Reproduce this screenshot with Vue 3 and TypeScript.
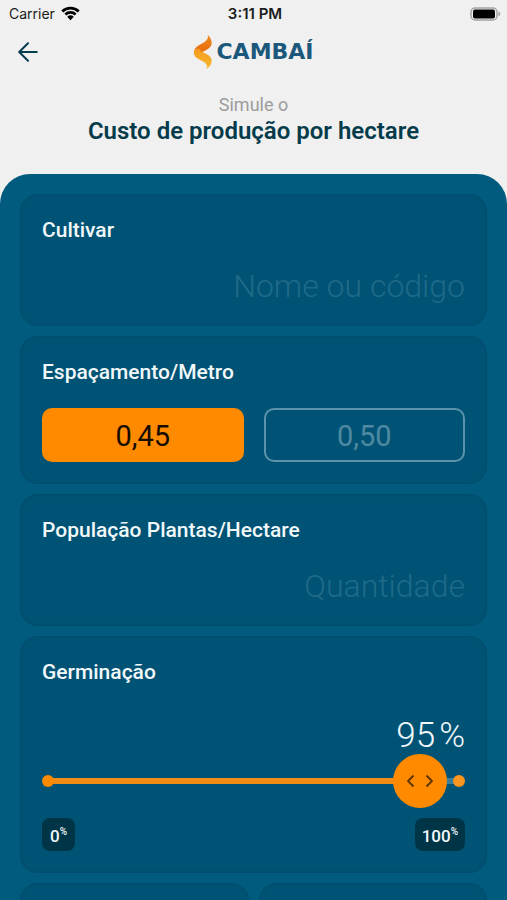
<script setup lang="ts">
import { computed, ref } from 'vue'

const cultivar = ref('')
const population = ref('')
const spacings = ['0,45', '0,50']
const spacing = ref('0,45')
const germination = ref(95)

const fraction = computed(() => germination.value / 100)
const gripStyle = computed(() => ({
  left: `calc(27px + (100% - 54px) * ${fraction.value})`,
}))
const trackStyle = computed(() => ({
  '--filled': `calc(27px + (100% - 54px) * ${fraction.value})`,
}))
</script>

<template>
  <div class="screen">
    <div class="status">
      <span class="carrier">
        Carrier
        <svg class="wifi" viewBox="0 0 18 14" aria-hidden="true">
          <path d="M1.2 5.100a11.200 11.200 0 0 1 15.600 0" />
          <path d="M4.1 8a7.1 7.1 0 0 1 9.8 0" />
          <path class="solid" d="M5.9 10.1a4.6 4.6 0 0 1 6.2 0L9 13.4z" />
        </svg>
      </span>
      <time class="clock">3:11 PM</time>
      <svg class="battery" viewBox="0 0 31 14" aria-hidden="true">
        <rect class="case" x="1" y="1" width="26" height="12" rx="4" />
        <rect x="3" y="2.500" width="22" height="9" rx="2" />
        <path class="tip" d="M28.4 4.6c2.6.8 2.6 4 0 4.8z" />
      </svg>
    </div>

    <header class="bar">
      <button class="back" type="button" aria-label="Voltar">
        <svg viewBox="0 0 20 20" aria-hidden="true">
          <path d="M10 1.2 1.2 10l8.800 8.800M1.500 10H18.800" />
        </svg>
      </button>
      <div class="brand">
        <svg viewBox="0 0 20 36" aria-hidden="true">
          <defs>
            <linearGradient id="flameTop" x1="0" y1="0" x2="0" y2="1">
              <stop offset="0" stop-color="#f08a24" />
              <stop offset="0.6" stop-color="#e8700f" />
              <stop offset="1" stop-color="#f08c1c" />
            </linearGradient>
            <linearGradient id="flameBottom" x1="0" y1="0" x2="0" y2="1">
              <stop offset="0" stop-color="#f39a20" />
              <stop offset="1" stop-color="#f8b92c" />
            </linearGradient>
          </defs>
          <path fill="url(#flameTop)" d="M14.800 1C15.600 5 13 7.500 8.500 9.800 3.500 12.300.2 15.200 1.300 20c.3 1.700 1.500 3 3 4 .6-3.400 4-5.500 8.200-7.600C17.500 14 19 11.500 18.600 8 18.300 4.800 16.500 2.500 14.800 1z" />
          <path fill="url(#flameBottom)" d="M1.200 16.500C.4 21.300 3 24 7.500 26.200c5 2.400 7.400 4 6.200 8.800 3.500-2.300 5.200-5.200 4.900-8.700-.3-3.600-3-5.300-7.300-7.300-2.400-1.100-4-2.200-4.600-4-2.600-.6-4.900-.2-5.500 1.500z" />
        </svg>
        <span>CAMBAÍ</span>
      </div>
    </header>

    <div class="heading">
      <p>Simule o</p>
      <h1>Custo de produção por hectare</h1>
    </div>

    <main class="panel">
      <section class="card">
        <label class="title" for="cultivar">Cultivar</label>
        <input id="cultivar" v-model="cultivar" class="entry" type="text" placeholder="Nome ou código" />
      </section>

      <section class="card">
        <h2 id="spacing-title" class="title">Espaçamento/Metro</h2>
        <div class="options" role="group" aria-labelledby="spacing-title">
          <button
            v-for="value in spacings"
            :key="value"
            type="button"
            class="option"
            :class="{ selected: value === spacing }"
            :aria-pressed="value === spacing"
            @click="spacing = value"
          >
            {{ value }}
          </button>
        </div>
      </section>

      <section class="card">
        <label class="title" for="population">População Plantas/Hectare</label>
        <input id="population" v-model="population" class="entry" type="text" inputmode="numeric" placeholder="Quantidade" />
      </section>

      <section class="card">
        <label class="title" for="germination">Germinação</label>
        <output class="reading" for="germination">{{ germination }}<span>%</span></output>
        <div class="slider" :style="trackStyle">
          <input id="germination" v-model.number="germination" type="range" min="0" max="100" />
          <svg class="grip" :style="gripStyle" viewBox="0 0 28 14" aria-hidden="true">
            <path d="M7.500 1.500 2 7 7.500 12.500M20.500 1.500 26 7 20.500 12.500" />
          </svg>
        </div>
        <div class="limits">
          <span class="limit">0<sup>%</sup></span>
          <span class="limit">100<sup>%</sup></span>
        </div>
      </section>

      <div class="pair">
        <section class="card"></section>
        <section class="card"></section>
      </div>
    </main>
  </div>
</template>

<style>
body {
  background: #f0f0f0;
}
</style>

<style scoped>
* {
  box-sizing: border-box;
}

.screen {
  display: flex;
  flex-direction: column;
  height: 100vh;
  overflow: hidden;
  background: #f0f0f0;
  font-family: Roboto, "Liberation Sans", sans-serif;
}

.status {
  display: grid;
  grid-template-columns: 1fr auto 1fr;
  align-items: center;
  height: 27px;
  padding: 0 6px 0 9px;
  color: #1c1c1c;
  font: 14px/20px Inter, "Liberation Sans", sans-serif;
}

.carrier {
  display: flex;
  align-items: center;
  gap: 6px;
}

.wifi {
  width: 19px;
  height: 15px;
  fill: none;
  stroke: #000;
  stroke-width: 2.6;
}

.wifi .solid {
  fill: #000;
  stroke: none;
}

.clock {
  font-size: 15px;
  font-weight: 600;
}

.battery {
  justify-self: end;
  width: 31px;
  height: 14px;
}

.battery .case {
  fill: #f0f0f0;
  stroke: #a3a3a3;
  stroke-width: 1.5;
}

.battery .tip {
  fill: #a3a3a3;
}

.bar {
  display: grid;
  grid-template-columns: 1fr auto 1fr;
  align-items: center;
  height: 50px;
  padding: 0 18px;
}

.back {
  display: flex;
  width: 20px;
  padding: 0;
  border: 0;
  background: none;
  cursor: pointer;
}

.back svg {
  width: 20px;
  height: 20px;
  fill: none;
  stroke: #063d4e;
  stroke-width: 2;
  stroke-linecap: round;
  stroke-linejoin: round;
}

.brand {
  display: flex;
  align-items: center;
  gap: 3px;
  color: #1b587b;
  font: 700 22px/36px "DejaVu Sans", Inter, sans-serif;
}

.brand svg {
  width: 20px;
  height: 36px;
}

.heading {
  padding: 16px 20px 28px;
  text-align: center;
}

.heading p {
  margin: 0;
  color: #9c9c9c;
  font-size: 18px;
  font-weight: 400;
  line-height: 24px;
}

.heading h1 {
  margin: 0;
  color: #063b4b;
  font-size: 24px;
  font-weight: 600;
  line-height: 29px;
}

.panel {
  display: flex;
  flex: 1;
  flex-direction: column;
  gap: 10px;
  min-height: 0;
  padding: 20px;
  overflow-y: auto;
  scrollbar-width: none;
  border-radius: 30px 30px 0 0;
  background: #005b7f;
}

.card {
  display: flex;
  flex: none;
  flex-direction: column;
  padding: 22px;
  border-radius: 18px;
  background: #005374;
  box-shadow: inset 0 0 2px 1px #004d6d;
}

.title {
  margin: 0;
  color: #f2f8fa;
  font-size: 21px;
  font-weight: 500;
  line-height: 28px;
}

.entry {
  width: 100%;
  height: 44px;
  margin-top: 16px;
  padding: 0;
  border: 0;
  outline: 0;
  background: none;
  color: #f2f8fa;
  font: 300 32px/44px Roboto, "Liberation Sans", sans-serif;
  text-align: right;
}

.card:has(.entry) {
  padding-bottom: 18px;
}

.card .entry {
  margin-top: 20px;
}

.entry::placeholder {
  color: #1f6a89;
  opacity: 1;
}

.options {
  display: grid;
  grid-template-columns: 1fr 1fr;
  gap: 20px;
  margin-top: 22px;
}

.option {
  height: 54px;
  padding: 2px 0 0;
  border: 2px solid #5c93aa;
  border-radius: 10px;
  background: none;
  color: #4f89a2;
  font: 400 29px/48px Roboto, "Liberation Sans", sans-serif;
  cursor: pointer;
}

.option.selected {
  border-color: #ff8a00;
  background: #ff8a00;
  color: #170c00;
}

.reading {
  display: flex;
  justify-content: flex-end;
  gap: 4px;
  margin-top: 32px;
  color: #f2f8fa;
  font-size: 35px;
  font-weight: 300;
  line-height: 36px;
}

.slider {
  position: relative;
  display: flex;
  align-items: center;
  height: 54px;
}

.slider::before,
.slider::after {
  position: absolute;
  left: 0;
  width: 12px;
  height: 12px;
  border-radius: 50%;
  background: #ff8a00;
  content: "";
}

.slider::after {
  right: 0;
  left: auto;
  background: #fb951f;
}

.slider input {
  flex: 1;
  min-width: 0;
  height: 54px;
  margin: 0;
  appearance: none;
  background: linear-gradient(90deg, #f18d14 var(--filled), #3c7d99 var(--filled)) center / calc(100% - 8px) 6px no-repeat;
  cursor: pointer;
}

.slider input::-webkit-slider-thumb {
  width: 54px;
  height: 54px;
  border: 0;
  border-radius: 50%;
  appearance: none;
  background: #ff8a00;
}

.grip {
  position: absolute;
  width: 28px;
  height: 14px;
  transform: translateX(-50%);
  fill: none;
  stroke: #5c3302;
  stroke-width: 1.8;
  pointer-events: none;
}

.limits {
  display: flex;
  justify-content: space-between;
  margin-top: 10px;
}

.limit {
  min-width: 33px;
  padding: 3px 7px 0;
  border-radius: 8px;
  background: #003548;
  color: #f2f8fa;
  font-size: 17px;
  font-weight: 500;
  line-height: 30px;
  text-align: center;
}

.limit sup {
  font-size: 10px;
  line-height: 0;
}

.pair {
  display: grid;
  flex: none;
  grid-template-columns: 1fr 1fr;
  gap: 10px;
}

.pair .card {
  min-height: 132px;
}
</style>
